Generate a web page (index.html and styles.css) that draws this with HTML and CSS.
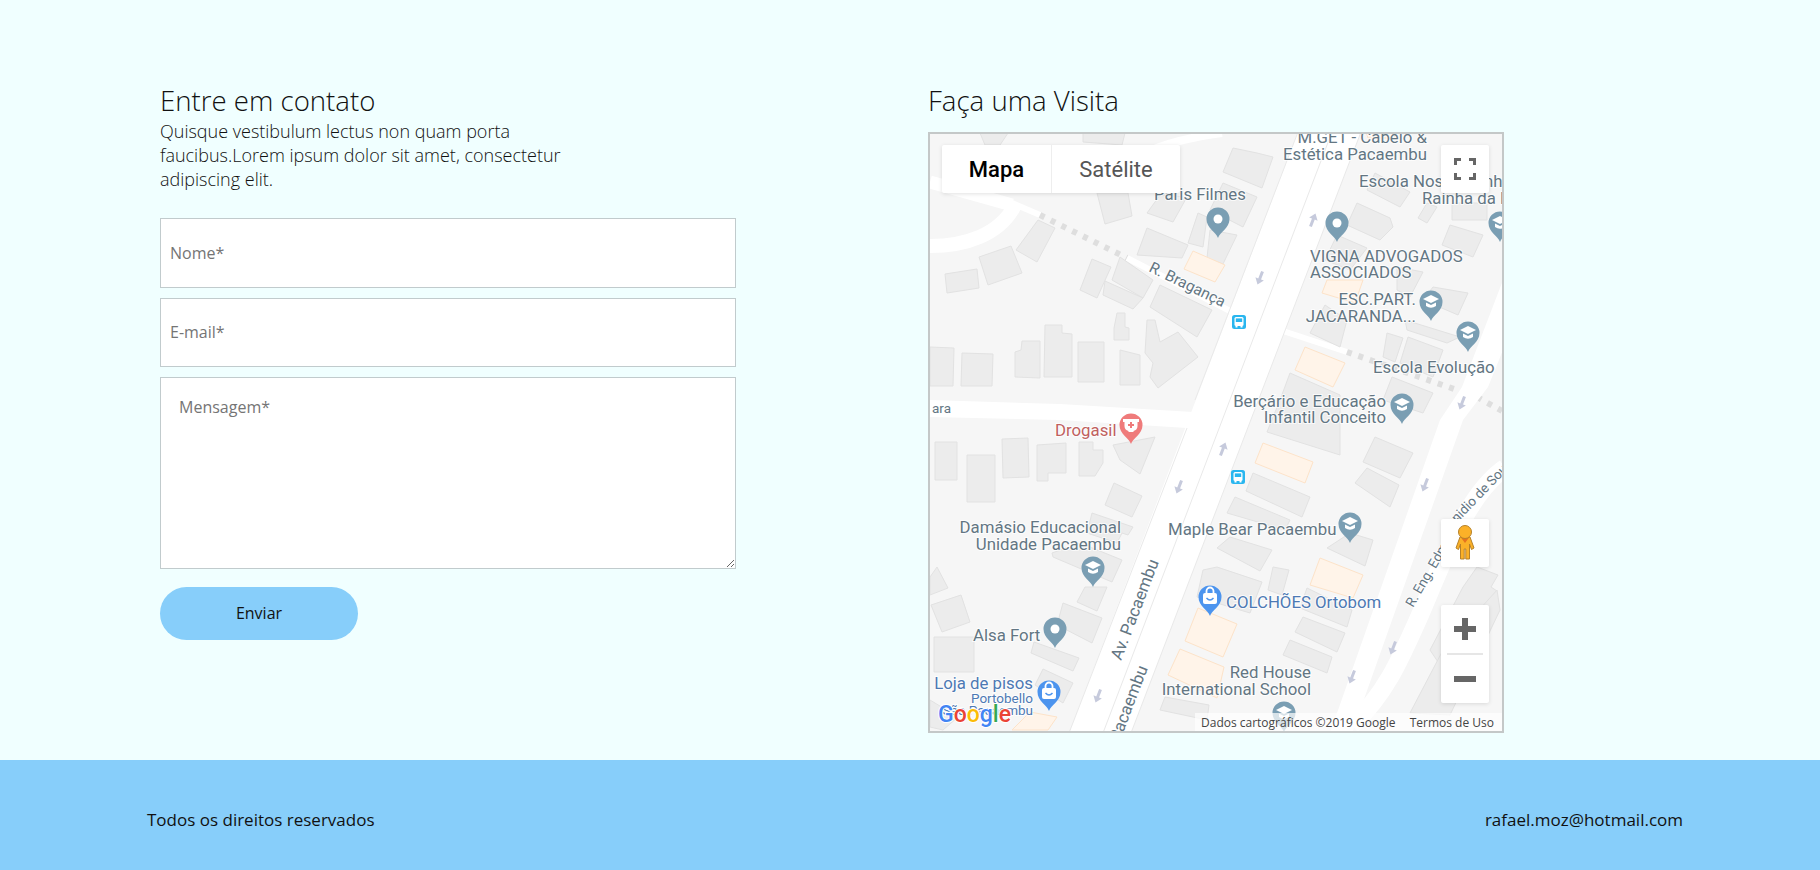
FILE: index.html
```html
<!DOCTYPE html>
<html lang="en">
<head>
  <meta charset="UTF-8" />
  <title>Contato</title>
  <link rel="stylesheet" href="styles.css">
</head>
<body>
  <section class="contact">
    <div class="col">
      <h2 class="title">Entre em contato</h2>
      <p class="intro">Quisque vestibulum lectus non quam porta faucibus.Lorem ipsum dolor sit amet, consectetur adipiscing elit.</p>
      <form class="form">
        <input class="field" type="text" placeholder="Nome*">
        <input class="field field-mail" type="email" placeholder="E-mail*">
        <textarea class="field field-msg" placeholder="Mensagem*"></textarea>
        <button class="send" type="button">Enviar</button>
      </form>
    </div>

    <div class="col">
      <h2 class="title title-map">Faça uma Visita</h2>
      <div class="map">
        <svg class="map-canvas" viewBox="930 134 572 597" width="572" height="597">
          <defs>
            <path id="drop" d="M0 19C-2 13-11.5 9-11.5 0A11.5 11.5 0 1 1 11.5 0C11.5 9 2 13 0 19Z"/>
            <g id="pin-dot">
              <use href="#drop" fill="#7a9eb3"/>
              <circle r="4.5" fill="#fff"/>
            </g>
            <g id="pin-school">
              <use href="#drop" fill="#7a9eb3"/>
              <path fill="#fff" d="M-8-3 0-7 8-3 0 1Z"/>
              <path fill="#fff" d="M-5 0.5V4Q0 7.5 5 4V0.5L0 3Z"/>
            </g>
            <g id="pin-shop">
              <use href="#drop" fill="#4c94ee"/>
              <rect x="-7" y="-4" width="14" height="11" rx="2" fill="#fff"/>
              <path d="M-3.5-4V-6A3.5 3.5 0 0 1 3.5-6V-4" fill="none" stroke="#fff" stroke-width="1.8"/>
              <path d="M-3.5 1Q0 5 3.5 1" fill="none" stroke="#4c94ee" stroke-width="1.4"/>
            </g>
            <g id="pin-drug">
              <use href="#drop" fill="#ef7b7b"/>
              <path fill="#fff" d="M-8-6H8V-3H6.5V1Q6.5 5 2.5 6V7H-2.5V6Q-6.5 5-6.5 1V-3H-8Z"/>
              <path fill="#ef7b7b" d="M-1-3H1V-1H3V1H1V3H-1V1H-3V-1H-1Z"/>
            </g>
            <g id="bus">
              <rect x="-7" y="-7" width="14" height="14" rx="2.5" fill="#29b6ef"/>
              <rect x="-4.5" y="-5" width="9" height="9" rx="1.5" fill="#fff"/>
              <rect x="-3.2" y="-3.6" width="6.4" height="3.6" fill="#29b6ef"/>
              <rect x="-3.5" y="4" width="2" height="1.5" fill="#fff"/>
              <rect x="1.5" y="4" width="2" height="1.5" fill="#fff"/>
            </g>
            <path id="arrow" fill="#c6cadc" d="M0-7 4.5-1H1.5V7H-1.5V-1H-4.5Z"/>
          </defs>

          <rect class="ground" x="930" y="134" width="572" height="597"/>

          <!-- roads -->
          <polygon class="road" points="1298,132 1361,132 1131,733 1069,733"/>
          <polygon class="road" points="930,400 1060,404 1193,412 1230,420 1187,440 1187,428 1060,420 930,417"/>
          <path class="street" stroke-width="13" d="M930 182L1012 205"/>
          <path class="street" stroke-width="14" d="M930 246C965 246 1000 235 1015 205"/>
          <path class="street" stroke-width="6" d="M1012 203L1040 215"/>
          <path class="dash" d="M1040 215L1127 258"/>
          <path class="street" stroke-width="6" d="M1127 258L1232 312"/>
          <path class="street" stroke-width="6" d="M1283 331L1347 352"/>
          <path class="dash" d="M1347 352L1457 390"/>
          <path class="dash" d="M1477 397L1502 411"/>
          <polygon class="road" points="1330,733 1352,733 1463,420 1488,387 1505,345 1505,275 1462,387 1440,420"/>
          <path class="street" stroke-width="18" d="M1352 725C1385 695 1400 660 1420 615C1440 570 1465 495 1505 468"/>
          <path class="street" stroke-width="8" d="M1152 150C1175 140 1200 136 1222 133"/>
          <path class="edge" d="M1332 132L1103 733M1298 132L1195 400M1187 428L1069 733M1361 132L1131 733"/>

          <!-- buildings, left of the avenue -->
          <g class="bld">
            <polygon points="980,133 1008,133 1000,145 985,145"/>
            <polygon points="1083,133 1125,133 1122,145 1083,142"/>
            <polygon points="1097,193 1128,193 1132,216 1105,224"/>
            <polygon points="1147,213 1160,195 1187,197 1173,222"/>
            <polygon points="1147,228 1188,245 1182,258 1137,255"/>
            <polygon points="1198,213 1207,217 1203,247 1188,243"/>
            <polygon points="1016,250 1027,235 1038,220 1055,228 1037,262"/>
            <polygon points="979,257 1011,246 1022,273 988,285"/>
            <polygon points="945,274 977,269 979,288 947,293"/>
            <polygon points="1092,259 1111,267 1097,298 1080,290"/>
            <polygon points="1120,257 1153,280 1143,298 1112,280"/>
            <polygon points="1105,281 1143,298 1133,309 1103,295"/>
            <polygon points="1160,285 1212,310 1197,337 1150,307"/>
            <polygon points="1117,313 1125,313 1125,327 1129,328 1129,340 1114,340 1114,328"/>
            <polygon points="1045,325 1062,325 1062,333 1072,334 1072,377 1044,377"/>
            <polygon points="1022,341 1040,341 1040,378 1015,377 1015,352 1021,350"/>
            <polygon points="1078,342 1104,342 1104,382 1078,382"/>
            <polygon points="962,353 993,354 992,386 961,386"/>
            <polygon points="930,347 954,348 953,386 930,386"/>
            <polygon points="1120,350 1140,355 1140,385 1120,385"/>
            <polygon points="1147,320 1155,320 1160,342 1178,332 1198,357 1158,388 1150,377 1153,363 1145,353"/>
            <polygon points="1233,148 1257,153 1273,157 1262,188 1223,172"/>
            <polygon points="1223,183 1257,197 1243,227 1210,210"/>
            <polygon points="1210,230 1237,235 1223,264 1207,258"/>
            <polygon points="935,442 957,442 957,480 935,480"/>
            <polygon points="967,455 995,455 995,502 967,502"/>
            <polygon points="1002,439 1028,438 1029,477 1003,478"/>
            <polygon points="1037,445 1066,443 1066,473 1048,473 1048,481 1037,481"/>
            <polygon points="1079,442 1093,442 1093,450 1103,450 1103,463 1095,476 1079,476"/>
            <polygon points="1113,445 1155,437 1140,474 1120,460"/>
            <polygon points="1114,483 1142,496 1132,517 1105,505"/>
            <polygon points="1092,513 1133,527 1128,535 1122,533 1117,543 1087,533"/>
            <polygon points="1052,553 1080,543 1122,560 1112,582 1053,557"/>
            <polygon points="1085,587 1107,587 1097,611 1077,602"/>
            <polygon points="1063,603 1102,618 1092,643 1057,625"/>
            <polygon points="1034,642 1079,658 1073,671 1031,653"/>
            <polygon points="1043,669 1073,683 1063,703 1035,685"/>
            <polygon points="930,577 937,567 948,588 930,595"/>
            <polygon points="931,605 961,595 970,622 942,632"/>
            <polygon points="934,637 974,637 974,672 934,672"/>
            <polygon points="930,700 958,717 943,730 930,727"/>
          </g>

          <!-- buildings, right of the avenue -->
          <g class="bld">
            <polygon points="1375,173 1410,192 1400,207 1367,190"/>
            <polygon points="1357,203 1390,218 1393,227 1380,240 1347,225"/>
            <polygon points="1418,218 1427,203 1437,207 1427,223"/>
            <polygon points="1452,203 1487,203 1487,220 1452,220"/>
            <polygon points="1450,225 1483,235 1473,257 1442,245"/>
            <polygon points="1337,235 1367,248 1350,270 1325,260"/>
            <polygon points="1397,267 1423,272 1410,297 1397,290"/>
            <polygon points="1433,287 1468,293 1458,315 1423,300"/>
            <polygon points="1325,305 1347,320 1340,347 1310,333"/>
            <polygon points="1405,320 1460,337 1447,343 1407,330"/>
            <polygon points="1387,333 1403,338 1395,362 1383,357"/>
            <polygon points="1408,337 1443,350 1433,377 1400,363"/>
            <polygon points="1392,377 1433,393 1423,413 1383,400"/>
            <polygon points="1290,373 1340,395 1340,455 1267,432 1280,400"/>
            <polygon points="1253,473 1310,497 1302,517 1246,491"/>
            <polygon points="1235,497 1290,520 1285,530 1227,513"/>
            <polygon points="1217,548 1230,537 1272,550 1260,571"/>
            <polygon points="1203,570 1217,567 1262,582 1250,613 1197,597"/>
            <polygon points="1363,462 1375,437 1413,453 1400,478"/>
            <polygon points="1355,483 1367,468 1399,485 1390,507"/>
            <polygon points="1327,548 1350,533 1373,540 1365,566"/>
            <polygon points="1273,567 1289,570 1282,595 1268,590"/>
            <polygon points="1307,588 1352,610 1347,627 1300,608"/>
            <polygon points="1303,617 1345,633 1337,652 1295,632"/>
            <polygon points="1290,640 1332,657 1327,673 1283,655"/>
            <polygon points="1165,697 1209,705 1207,720 1160,710"/>
            <polygon points="1463,587 1477,567 1498,575 1491,587 1497,591 1440,665 1430,650"/>
            <polygon points="1410,713 1443,650 1497,590 1500,610 1450,715"/>
          </g>

          <g class="sch">
            <polygon points="1366,132 1396,132 1394,138 1368,138"/>
            <polygon points="1193,251 1225,265 1215,282 1184,269"/>
            <polygon points="1327,280 1363,280 1355,303 1322,293"/>
            <polygon points="1305,347 1345,363 1333,387 1295,370"/>
            <polygon points="1263,443 1313,462 1305,483 1255,463"/>
            <polygon points="1320,558 1363,575 1353,598 1310,585"/>
            <polygon points="1198,608 1237,624 1223,657 1185,641"/>
            <polygon points="1180,649 1224,667 1217,698 1168,675"/>
            <polygon points="1030,712 1057,717 1048,730 1012,730"/>
          </g>

          <!-- one way arrows -->
          <use href="#arrow" transform="translate(1313 220) rotate(21)"/>
          <use href="#arrow" transform="translate(1260 278) rotate(201)"/>
          <use href="#arrow" transform="translate(1223 449) rotate(21)"/>
          <use href="#arrow" transform="translate(1179 487) rotate(201)"/>
          <use href="#arrow" transform="translate(1098 696) rotate(201)"/>
          <use href="#arrow" transform="translate(1425 485) rotate(201)"/>
          <use href="#arrow" transform="translate(1393 648) rotate(201)"/>
          <use href="#arrow" transform="translate(1352 677) rotate(201)"/>
          <use href="#arrow" transform="translate(1462 403) rotate(201)"/>

          <use href="#bus" transform="translate(1239 322)"/>
          <use href="#bus" transform="translate(1238 477)"/>

          <!-- pins -->
          <use href="#pin-dot" transform="translate(1218 219)"/>
          <use href="#pin-dot" transform="translate(1337 223)"/>
          <use href="#pin-dot" transform="translate(1055 629)"/>
          <use href="#pin-school" transform="translate(1431 302)"/>
          <use href="#pin-school" transform="translate(1468 333)"/>
          <use href="#pin-school" transform="translate(1402 405)"/>
          <use href="#pin-school" transform="translate(1500 223)"/>
          <use href="#pin-school" transform="translate(1093 568)"/>
          <use href="#pin-school" transform="translate(1350 524)"/>
          <use href="#pin-school" transform="translate(1284 713)"/>
          <use href="#pin-shop" transform="translate(1210 597)"/>
          <use href="#pin-shop" transform="translate(1049 692)"/>
          <use href="#pin-drug" transform="translate(1131 425)"/>

          <!-- labels -->
          <g class="lbl">
            <text x="1427" y="143" text-anchor="end">M.GET - Cabelo &amp;</text>
            <text x="1427" y="160" text-anchor="end">Estética Pacaembu</text>
            <text x="1359" y="187">Escola Nossa Senhora</text>
            <text x="1422" y="204">Rainha da P</text>
            <text x="1154" y="200">Paris Filmes</text>
            <text x="1310" y="262">VIGNA ADVOGADOS</text>
            <text x="1310" y="278">ASSOCIADOS</text>
            <text x="1416" y="305" text-anchor="end">ESC.PART.</text>
            <text x="1416" y="322" text-anchor="end">JACARANDA...</text>
            <text x="1373" y="373">Escola Evolução</text>
            <text x="1386" y="407" text-anchor="end">Berçário e Educação</text>
            <text x="1386" y="423" text-anchor="end">Infantil Conceito</text>
            <text x="1121" y="533" text-anchor="end">Damásio Educacional</text>
            <text x="1121" y="550" text-anchor="end">Unidade Pacaembu</text>
            <text x="1168" y="535">Maple Bear Pacaembu</text>
            <text x="973" y="641">Alsa Fort</text>
            <text x="1311" y="678" text-anchor="end">Red House</text>
            <text x="1311" y="695" text-anchor="end">International School</text>
            <text transform="translate(1121 661) rotate(-69)">Av. Pacaembu</text>
            <text transform="translate(1148 668) rotate(-69)" text-anchor="end">Av. Pacaembu</text>
            <text class="lbl-road" transform="translate(1148 271) rotate(26)">R. Bragança</text>
            <text class="lbl-sm" transform="translate(1413 608) rotate(-60)">R. Eng. Edmundo</text>
            <text class="lbl-sm" transform="translate(1457 523) rotate(-46)">nidio de Souza</text>
            <text class="lbl-sm" x="932" y="413">ara</text>
          </g>
          <text class="lbl lbl-red" x="1055" y="436">Drogasil</text>
          <g class="lbl lbl-blue">
            <text x="1226" y="608">COLCHÕES Ortobom</text>
            <text x="1033" y="689" text-anchor="end">Loja de pisos</text>
            <text class="lbl-sm" x="1033" y="703" text-anchor="end">Portobello</text>
            <text class="lbl-sm" x="1033" y="715" text-anchor="end">São Pacaembu</text>
          </g>

          <text class="logo" x="938" y="722"><tspan fill="#4285f4">G</tspan><tspan fill="#ea4335">o</tspan><tspan fill="#fbbc05">o</tspan><tspan fill="#4285f4">g</tspan><tspan fill="#34a853">l</tspan><tspan fill="#ea4335">e</tspan></text>
        </svg>

        <div class="map-type ctl">
          <span class="type-btn type-on">Mapa</span>
          <span class="type-btn">Satélite</span>
        </div>

        <div class="map-full ctl">
          <svg viewBox="0 0 22 22" width="22" height="22"><path fill="none" stroke="#666" stroke-width="3" d="M1.5 7V1.500H7M15 1.500H20.500V7M20.500 15V20.500H15M7 20.500H1.500V15"/></svg>
        </div>

        <div class="map-peg ctl">
          <svg viewBox="0 0 24 36" width="24" height="36">
            <path fill="#fbb128" stroke="#b5812a" d="M7 12Q12 10 17 12L21 23 18.500 24.500 16.500 19V34H12.800V24H11.200V34H7.500V19L5.500 24.500 3 23Z"/>
            <path fill="#e5731f" d="M7.500 12H16.500L12 18Z"/>
            <circle cx="12" cy="7" r="6.500" fill="#fbb128" stroke="#b5812a"/>
          </svg>
        </div>

        <div class="map-zoom ctl">
          <div class="zoom-btn"><span class="plus"></span></div>
          <div class="zoom-line"></div>
          <div class="zoom-btn"><span class="minus"></span></div>
        </div>

        <div class="map-attr">
          <span>Dados cartográficos ©2019 Google</span>
          <span>Termos de Uso</span>
        </div>
      </div>
    </div>
  </section>

  <footer class="footer">
    <span>Todos os direitos reservados</span>
    <span>rafael.moz@hotmail.com</span>
  </footer>
</body>
</html>
```

FILE: styles.css
```css
* { box-sizing: border-box; }

body {
  margin: 0;
  background: #f0ffff;
  font-family: "Open Sans", sans-serif;
  color: #111;
}

.contact {
  display: flex;
  gap: 192px;
  height: 760px;
  padding: 82px 316px 0 160px;
}

.col { width: 576px; }

.title {
  margin: 0 0 1px;
  font-size: 27.6px;
  line-height: 36px;
  font-weight: 300;
}

.title-map { margin-bottom: 14px; }

.intro {
  margin: 0 0 27px;
  width: 420px;
  font-size: 18px;
  line-height: 24px;
  font-weight: 300;
}

.form {
  display: flex;
  flex-direction: column;
  align-items: flex-start;
}

.field {
  display: block;
  width: 576px;
  height: 70px;
  margin-bottom: 10px;
  padding: 0 9px;
  background: #fff;
  border: 1px solid #c1cbcd;
  border-radius: 0;
  outline: none;
  font-family: "Open Sans", sans-serif;
  font-size: 16px;
}

.field-mail { height: 69px; padding-bottom: 2px; }

.field-msg {
  height: 192px;
  margin-bottom: 18px;
  padding: 18px 18px;
}

.send {
  width: 198px;
  height: 53px;
  padding: 0 0 2px;
  background: #87cefa;
  border: none;
  border-radius: 27px;
  font-family: "Open Sans", sans-serif;
  font-size: 16px;
  color: #111;
}

/* map */
.map {
  position: relative;
  width: 576px;
  height: 601px;
  overflow: hidden;
  border: 2px solid #c4c8c8;
}

.map-canvas { display: block; }

.ground { fill: #f6f6f6; }
.road { fill: #fff; }
.street { fill: none; stroke: #fff; }
.dash { fill: none; stroke: #dedede; stroke-width: 6; stroke-dasharray: 5 7; }
.edge { fill: none; stroke: #e9e9e9; stroke-width: 1; }

.bld polygon { fill: #ececec; stroke: #e2e2e2; }
.sch polygon { fill: #fff4e9; stroke: #fde3c9; }

.lbl text, .lbl-red {
  font-family: Roboto, sans-serif;
  font-size: 16.8px;
  fill: #637683;
  stroke: #fff;
  stroke-width: 2px;
  stroke-opacity: 0.8;
  paint-order: stroke;
}

.lbl .lbl-sm { font-size: 13.5px; }
.lbl .lbl-road { font-size: 15.5px; }
.lbl-blue text { fill: #4d79b4; }
.lbl-red { fill: #c0605e; }

.logo {
  font-family: Roboto, sans-serif;
  font-size: 23px;
  font-weight: 500;
  stroke: #fff;
  stroke-width: 2px;
  paint-order: stroke;
}

.ctl {
  position: absolute;
  background: #fff;
  border-radius: 2px;
  box-shadow: 0 1px 4px rgba(0, 0, 0, 0.12);
}

.map-type {
  top: 11px;
  left: 12px;
  width: 238px;
  height: 48px;
  display: flex;
}

.type-btn {
  flex: 128px;
  display: flex;
  align-items: center;
  justify-content: center;
  font-family: Roboto, sans-serif;
  font-size: 22px;
  color: #565656;
}

.type-on {
  flex: 110px;
  font-weight: 500;
  color: #000;
  border-right: 1px solid #eee;
}

.map-full, .map-peg {
  right: 13px;
  width: 48px;
  height: 48px;
  display: flex;
  align-items: center;
  justify-content: center;
}

.map-full { top: 11px; }
.map-peg { top: 385px; }

.map-zoom {
  top: 471px;
  right: 13px;
  width: 48px;
  height: 98px;
}

.zoom-btn {
  height: 48px;
  display: flex;
  align-items: center;
  justify-content: center;
}

.zoom-line {
  height: 2px;
  margin: 0 6px;
  background: #e6e6e6;
}

.plus, .minus {
  position: relative;
  display: block;
  width: 22px;
  height: 6px;
  background: #666;
}

.plus::after {
  content: "";
  position: absolute;
  left: 8px;
  top: -8px;
  width: 6px;
  height: 22px;
  background: #666;
}

.map-attr {
  position: absolute;
  right: 0;
  bottom: 0;
  width: 307px;
  height: 18px;
  display: flex;
  justify-content: space-between;
  align-items: center;
  padding: 0 8px 0 6px;
  background: rgba(255, 255, 255, 0.7);
  font-size: 12px;
  color: #444;
}

.footer {
  height: 110px;
  padding: 9px 137px 0 147px;
  display: flex;
  justify-content: space-between;
  align-items: center;
  background: #87cefa;
  font-size: 17px;
}
```
